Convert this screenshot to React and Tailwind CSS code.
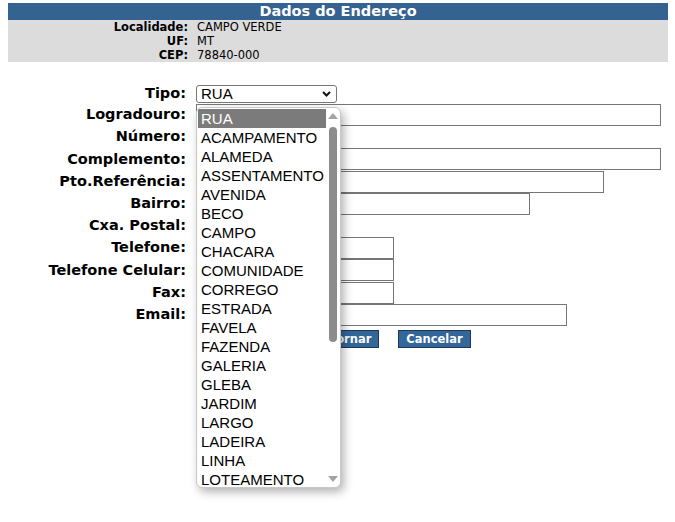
import React from 'react';

const tipos = [
  'RUA', 'ACAMPAMENTO', 'ALAMEDA', 'ASSENTAMENTO', 'AVENIDA', 'BECO', 'CAMPO',
  'CHACARA', 'COMUNIDADE', 'CORREGO', 'ESTRADA', 'FAVELA', 'FAZENDA', 'GALERIA',
  'GLEBA', 'JARDIM', 'LARGO', 'LADEIRA', 'LINHA', 'LOTEAMENTO',
];

const campos = [
  { label: 'Logradouro:', w: 'w-[465px]' },
  { label: 'Número:', w: 'w-[90px]' },
  { label: 'Complemento:', w: 'w-[465px]' },
  { label: 'Pto.Referência:', w: 'w-[408px]' },
  { label: 'Bairro:', w: 'w-[334px]' },
  { label: 'Cxa. Postal:', w: 'w-[90px]' },
  { label: 'Telefone:', w: 'w-[198px]' },
  { label: 'Telefone Celular:', w: 'w-[198px]' },
  { label: 'Fax:', w: 'w-[198px]' },
  { label: 'Email:', w: 'w-[371px]' },
];

const InfoRow = ({ label, value }) => (
  <div className="flex h-[14px] leading-[14px] text-[11.5px]">
    <div className="w-[180px] text-right font-bold">{label}</div>
    <div className="ml-[9px]">{value}</div>
  </div>
);

const TipoList = () => (
  <div className="absolute left-0 top-[22px] z-10 flex h-[381px] w-[145px] overflow-hidden rounded-[6px] border border-[#c8c8c8] bg-white font-normal shadow-[3px_4px_10px_rgba(0,0,0,0.3)]">
    <ul className="flex-1 pt-px pl-px" style={{ fontFamily: '"Liberation Sans", Arial, sans-serif' }}>
      {tipos.map((t, i) => (
        <li
          key={t}
          className={`h-[19px] pl-[3px] text-[15px] leading-[19px] ${i === 0 ? 'bg-[#7b7b7b] text-white' : 'text-black'}`}
        >
          {t}
        </li>
      ))}
    </ul>
    <div className="flex w-[14px] flex-col items-center pt-[5px] pb-[5px]">
      <svg width="10" height="6" viewBox="0 0 10 6"><path d="M0 6 L5 0 L10 6 Z" fill="#a3a3a3" /></svg>
      <div className="mt-[8px] h-[215px] w-[8px] rounded-full bg-[#8c8c8c]" />
      <div className="flex-1" />
      <svg width="10" height="6" viewBox="0 0 10 6"><path d="M0 0 L5 6 L10 0 Z" fill="#a3a3a3" /></svg>
    </div>
  </div>
);

export default function App() {
  return (
    <div className="min-h-[522px] bg-white text-black" style={{ fontFamily: '"DejaVu Sans", Verdana, sans-serif' }}>
      <div className="mx-2 w-[660px] pt-[3px]">
        <div className="h-[17px] bg-[#356391] text-center text-[14.5px] font-bold leading-[17px] text-white">
          Dados do Endereço
        </div>
        <div className="bg-[#dcdcdc]">
          <InfoRow label="Localidade:" value="CAMPO VERDE" />
          <InfoRow label="UF:" value="MT" />
          <InfoRow label="CEP:" value="78840-000" />
        </div>

        <div className="mt-[22px] text-[14.5px] font-bold">
          <div className="flex h-[20px] items-center">
            <div className="w-[178px] text-right">Tipo:</div>
            <div className="relative ml-[10px]">
              <div className="flex h-[18px] w-[141px] items-center justify-between rounded-[3px] border border-[#767676] bg-white pl-[4px] pr-[5px] text-[15px] font-normal" style={{ fontFamily: '"Liberation Sans", Arial, sans-serif' }}>
                <span>RUA</span>
                <svg width="9" height="6" viewBox="0 0 9 6"><path d="M1 1 L4.5 4.5 L8 1" fill="none" stroke="#111" strokeWidth="2" /></svg>
              </div>
              <TipoList />
            </div>
          </div>

          {campos.map((c) => (
            <div key={c.label} className="flex h-[22.2px] items-center">
              <div className="w-[178px] text-right">{c.label}</div>
              <div className={`ml-[10px] h-[22px] ${c.w} border border-[#767676] bg-white`} />
            </div>
          ))}

          <div className="mt-[4px] flex text-[11.5px]">
            <div className="ml-[298px] flex gap-[19px]">
              <button className="h-[18px] border border-[#1b3858] bg-[#336699] px-[7px] font-bold leading-[16px] text-white">Retornar</button>
              <button className="h-[18px] border border-[#1b3858] bg-[#336699] px-[7px] font-bold leading-[16px] text-white">Cancelar</button>
            </div>
          </div>
        </div>
      </div>
    </div>
  );
}
